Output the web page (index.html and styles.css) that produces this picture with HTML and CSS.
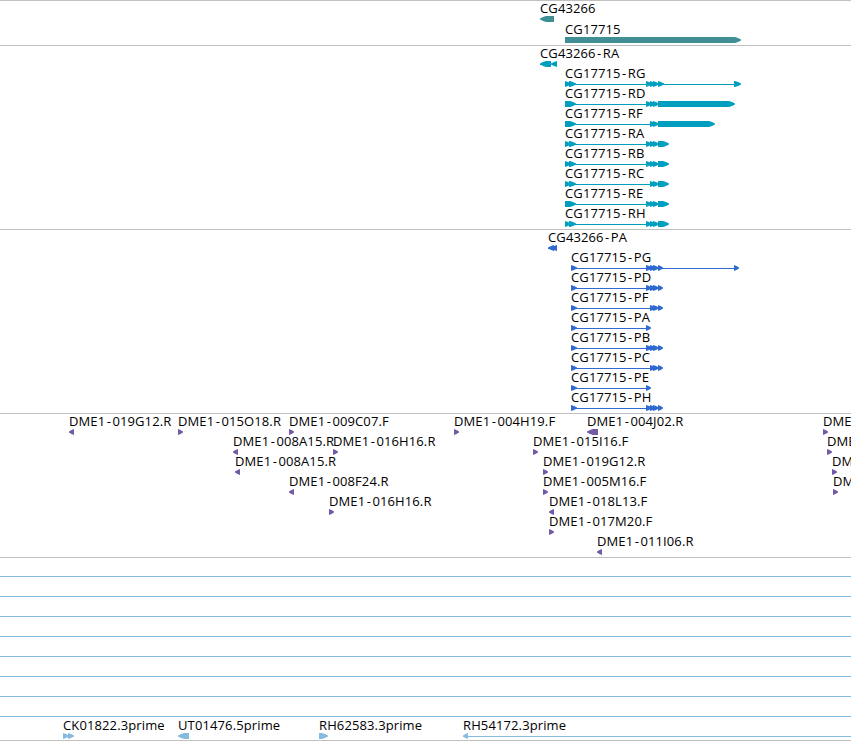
FILE: index.html
```
<!DOCTYPE html>
<html lang="en">
<head>
	<meta charset="UTF-8">
	<title>Genome Browser</title>
	<link rel="stylesheet" href="styles.css">
</head>
<body>
	<div class="browser" id="browser"></div>
	<script src="tracks.js"></script>
</body>
</html>
```
FILE: styles.css
```
* {
	margin: 0;
	padding: 0;
}
body {
	background: #fff;
	overflow: hidden;
}
.browser {
	width: 851px;
	border-bottom: 1px solid #c0c0c0;
}
.track {
	border-top: 1px solid #c0c0c0;
	padding-bottom: 3px;
}
.row {
	display: block;
	width: 851px;
	height: 20px;
	overflow: visible;
}
.gene .row {
	height: 21px;
}
.gene,
.est {
	padding-bottom: 2px;
}
.gene {
	fill: #3f8f95;
}
.transcript {
	fill: #009fbf;
}
.protein {
	fill: #306ad0;
}
.bac {
	fill: #735aa6;
}
.est {
	fill: #86bbdf;
}
.label {
	font-family: "Open Sans", "Noto Sans", sans-serif;
	font-size: 13px;
	letter-spacing: 0.12px;
	fill: #000;
}
```
FILE: tracks.js
```
// feature: [label, strand, [[start, end], ...]]
// strand is 1 or -1, the blocks are joined by a thin line
var tracks = [
	{ type: 'gene', rows: [
		[['CG43266', -1, [[540, 554]]]],
		[['CG17715', 1, [[565, 741]]]]
	]},
	{ type: 'transcript', rows: [
		[['CG43266-RA', -1, [[540, 551], [551, 557]]]],
		[['CG17715-RG', 1, [[565, 571], [569, 576], [646, 652], [650, 656], [653, 659], [658, 664], [734, 741]]]],
		[['CG17715-RD', 1, [[565, 576], [646, 652], [650, 656], [653, 659], [658, 735]]]],
		[['CG17715-RF', 1, [[565, 576], [650, 656], [653, 659], [658, 715]]]],
		[['CG17715-RA', 1, [[565, 571], [569, 576], [646, 652], [650, 656], [653, 659], [658, 669]]]],
		[['CG17715-RB', 1, [[565, 571], [569, 576], [646, 652], [650, 656], [653, 659], [658, 669]]]],
		[['CG17715-RC', 1, [[565, 571], [569, 576], [650, 656], [653, 659], [658, 669]]]],
		[['CG17715-RE', 1, [[565, 576], [646, 652], [650, 656], [653, 659], [658, 669]]]],
		[['CG17715-RH', 1, [[565, 571], [569, 576], [646, 652], [650, 656], [653, 659], [658, 669]]]]
	]},
	{ type: 'protein', rows: [
		[['CG43266-PA', -1, [[548, 554], [551, 557]]]],
		[['CG17715-PG', 1, [[571, 577], [646, 652], [650, 656], [653, 659], [658, 663], [734, 739]]]],
		[['CG17715-PD', 1, [[571, 577], [646, 652], [650, 656], [653, 659], [658, 663]]]],
		[['CG17715-PF', 1, [[571, 577], [650, 656], [653, 659], [658, 663]]]],
		[['CG17715-PA', 1, [[571, 577], [646, 651]]]],
		[['CG17715-PB', 1, [[571, 577], [646, 652], [650, 656], [653, 659], [658, 663]]]],
		[['CG17715-PC', 1, [[571, 577], [650, 656], [653, 659], [658, 663]]]],
		[['CG17715-PE', 1, [[571, 577], [646, 651]]]],
		[['CG17715-PH', 1, [[571, 577], [646, 652], [650, 656], [653, 659], [658, 663]]]]
	]},
	{ type: 'bac', rows: [
		[['DME1-019G12.R', -1, [[69, 74]]], ['DME1-015O18.R', 1, [[178, 183]]], ['DME1-009C07.F', 1, [[289, 294]]],
			['DME1-004H19.F', 1, [[454, 459]]], ['DME1-004J02.R', -1, [[587, 598]]], ['DME', 1, [[823, 828]]]],
		[['DME1-008A15.R', -1, [[233, 238]]], ['DME1-016H16.R', 1, [[333, 338]]], ['DME1-015I16.F', 1, [[533, 538]]], ['DME', 1, [[827, 832]]]],
		[['DME1-008A15.R', -1, [[235, 240]]], ['DME1-019G12.R', 1, [[543, 548]]], ['DM', 1, [[832, 837]]]],
		[['DME1-008F24.R', -1, [[289, 294]]], ['DME1-005M16.F', 1, [[543, 548]]], ['DM', 1, [[833, 838]]]],
		[['DME1-016H16.R', 1, [[329, 334]]], ['DME1-018L13.F', -1, [[549, 554]]]],
		[['DME1-017M20.F', 1, [[549, 554]]]],
		[['DME1-011I06.R', -1, [[597, 602]]]]
	]},
	{ type: 'est', rows: [
		// these run past both sides of the view
		[['', 1, [[-20, -14], [870, 880]]]],
		[['', 1, [[-20, -14], [870, 880]]]],
		[['', 1, [[-20, -14], [870, 880]]]],
		[['', 1, [[-20, -14], [870, 880]]]],
		[['', 1, [[-20, -14], [870, 880]]]],
		[['', 1, [[-20, -14], [870, 880]]]],
		[['', 1, [[-20, -14], [870, 880]]]],
		[['', 1, [[-20, -14], [870, 880]]]],
		[['CK01822.3prime', 1, [[63, 69], [68, 74]]], ['UT01476.5prime', -1, [[178, 189]]],
			['RH62583.3prime', 1, [[319, 328]]], ['RH54172.3prime', -1, [[463, 468], [870, 880]]]]
	]}
];

// box with a rounded off arrow head at the end of the strand
function drawBlock(start, end, strand) {
	var head = Math.min(6, end - start) * strand;
	var back = strand > 0 ? start : end;
	var tip = strand > 0 ? end : start;
	return '<path d="M' + back + ' 15H' + (tip - head) + 'L' + (tip - head / 2) + ' 16.1L' + tip + ' 17.4V18.6L' +
		(tip - head / 2) + ' 19.9L' + (tip - head) + ' 21H' + back + 'Z"/>';
}

function drawFeature(feature) {
	var blocks = feature[2];
	var x = blocks[0][0];
	var last = blocks[blocks.length - 1];
	var str = '';
	if (blocks.length > 1) {
		str += '<rect x="' + x + '" y="18" width="' + (last[0] - x) + '" height="1"/>';
	}
	for (var i = 0; i < blocks.length; i++) {
		str += drawBlock(blocks[i][0], blocks[i][1], feature[1]);
	}
	if (feature[0]) {
		// a bit of room on both sides of the dash
		var parts = feature[0].split('-');
		str += '<text class="label" x="' + x + '" y="12">' + parts[0];
		if (parts[1]) {
			str += '<tspan dx="1.4">-</tspan><tspan dx="1.4">' + parts[1] + '</tspan>';
		}
		str += '</text>';
	}
	return str;
}

var html = '';
for (var t = 0; t < tracks.length; t++) {
	html += '<div class="track ' + tracks[t].type + '">';
	for (var r = 0; r < tracks[t].rows.length; r++) {
		html += '<svg class="row">' + tracks[t].rows[r].map(drawFeature).join('') + '</svg>';
	}
	html += '</div>';
}
document.getElementById('browser').innerHTML = html;
```
